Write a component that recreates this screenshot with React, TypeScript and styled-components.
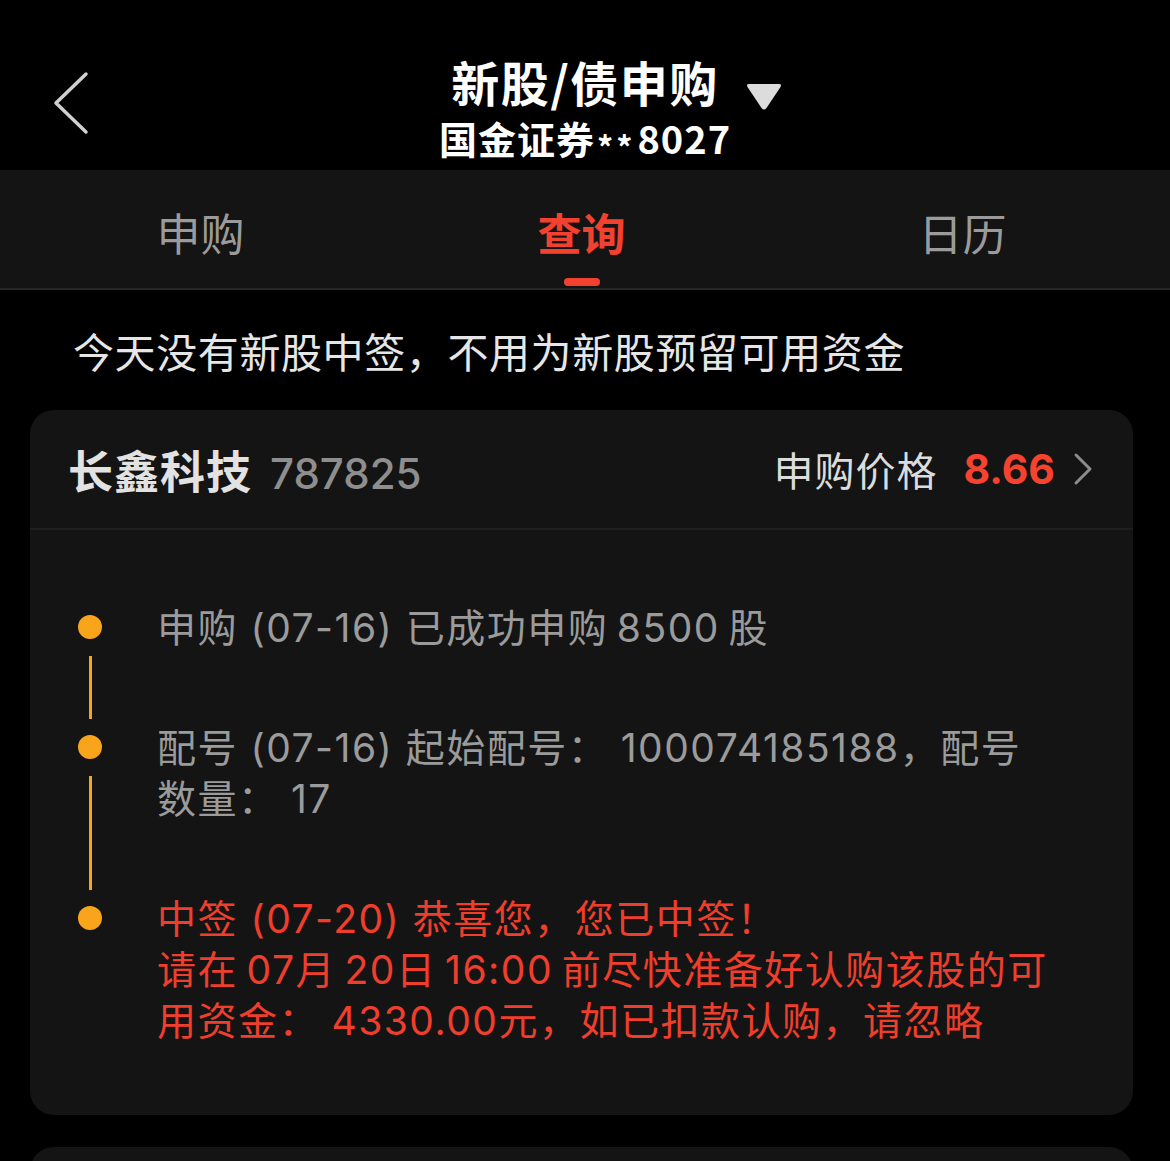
import styled, { createGlobalStyle } from "styled-components";

const GlobalStyle = createGlobalStyle`
  html, body {
    margin: 0;
    padding: 0;
    background: #000;
  }
  body {
    font-family: "Noto Sans CJK SC", "Noto Sans", sans-serif;
    color: #e6e6e6;
    -webkit-font-smoothing: antialiased;
  }
`;

const mixed = `Inter, "Noto Sans CJK SC", sans-serif`;

interface iStep {
  label: string;
  lines: string[];
  alert?: boolean;
}

const steps: iStep[] = [
  { label: "申购", lines: ["申购 (07-16) 已成功申购\u20098500\u2009股"] },
  {
    label: "配号",
    lines: ["配号 (07-16) 起始配号： 100074185188，配号", "数量： 17"],
  },
  {
    label: "中签",
    alert: true,
    lines: [
      "中签 (07-20) 恭喜您，您已中签！",
      "请在\u200907月\u200920日\u200916:00\u2009前尽快准备好认购该股的可",
      "用资金： 4330.00元，如已扣款认购，请忽略",
    ],
  },
];

const tabs = ["申购", "查询", "日历"];

export default function App() {
  return (
    <Page>
      <GlobalStyle />
      <Header>
        <BackCell>
          <svg width="40" height="64" viewBox="0 0 40 64">
            <polyline
              points="34,3 4,32 34,61"
              fill="none"
              stroke="#d0d0d0"
              strokeWidth="3.5"
              strokeLinecap="round"
              strokeLinejoin="round"
            />
          </svg>
        </BackCell>
        <TitleBlock>
          <Title>
            新股/债申购
            <Caret>
              <svg width="38" height="30" viewBox="0 0 38 30">
                <path d="M4 3 H34 Q37 3 35.5 6 L21.5 27 Q19 30 16.5 27 L2.5 6 Q1 3 4 3 Z" fill="#dcdcdc" />
              </svg>
            </Caret>
          </Title>
          <SubTitle>
            国金证券<Stars>**</Stars>8027
          </SubTitle>
        </TitleBlock>
        <div />
      </Header>

      <TabBar>
        {tabs.map((t) => (
          <Tab key={t} $active={t === "查询"}>
            <span>{t}</span>
            {t === "查询" && <Indicator />}
          </Tab>
        ))}
      </TabBar>

      <Notice>今天没有新股中签，不用为新股预留可用资金</Notice>

      <Card>
        <CardHead>
          <StockName>
            长鑫科技<Code>787825</Code>
          </StockName>
          <PriceBox>
            申购价格<Price>8.66</Price>
            <svg width="20" height="34" viewBox="0 0 20 34">
              <polyline
                points="3,3 17,17 3,31"
                fill="none"
                stroke="#8c8c8c"
                strokeWidth="3"
                strokeLinecap="round"
                strokeLinejoin="round"
              />
            </svg>
          </PriceBox>
        </CardHead>
        <Timeline>
          {steps.map((s, i) => (
            <Step key={s.label}>
              <Rail>
                <Dot />
                {i < steps.length - 1 && <Line />}
              </Rail>
              <StepText $alert={s.alert}>
                {s.lines.map((l) => (
                  <div key={l}>{l}</div>
                ))}
              </StepText>
            </Step>
          ))}
        </Timeline>
      </Card>

      <NextCard />
    </Page>
  );
}

const Page = styled.div`
  width: 1170px;
  height: 1161px;
  overflow: hidden;
  background: #000;
`;

const Header = styled.header`
  height: 170px;
  box-sizing: border-box;
  display: grid;
  grid-template-columns: 1fr auto 1fr;
  align-items: start;
`;

const BackCell = styled.div`
  padding: 71px 0 0 52px;
`;

const TitleBlock = styled.div`
  padding-top: 52px;
  display: flex;
  flex-direction: column;
  align-items: center;
  gap: 4px;
`;

const Title = styled.h1`
  position: relative;
  margin: 0;
  font-size: 48px;
  line-height: 58px;
  font-weight: 700;
  color: #fff;
  letter-spacing: 1.5px;
`;

const Caret = styled.span`
  position: absolute;
  left: calc(100% + 26px);
  top: 29px;
  display: flex;
`;

const SubTitle = styled.div`
  font-size: 38px;
  line-height: 48px;
  font-weight: 700;
  color: #fff;
  letter-spacing: 1px;
`;

const Stars = styled.span`
  position: relative;
  top: 6px;
  margin: 0 2px;
  font-size: 32px;
  letter-spacing: 3px;
`;

const TabBar = styled.nav`
  height: 118px;
  background: #141414;
  border-bottom: 2px solid #262626;
  display: grid;
  grid-template-columns: repeat(3, 381px);
  padding-left: 10px;
`;

const Tab = styled.div<{ $active?: boolean }>`
  display: flex;
  flex-direction: column;
  align-items: center;
  padding-top: 35px;
  font-size: 44px;
  line-height: 54px;
  font-weight: ${(p) => (p.$active ? 700 : 400)};
  color: ${(p) => (p.$active ? "#f2412f" : "#9b9b9b")};
`;

const Indicator = styled.div`
  width: 36px;
  height: 8px;
  margin-top: 19px;
  border-radius: 4px;
  background: #f2412f;
`;

const Notice = styled.p`
  margin: 0;
  padding: 32px 73px 32px;
  font-size: 41px;
  line-height: 56px;
  letter-spacing: 0.6px;
  color: #e6e6e6;
`;

const Card = styled.section`
  margin: 0 37px 0 30px;
  background: #141414;
  border-radius: 24px;
  overflow: hidden;
`;

const CardHead = styled.div`
  height: 120px;
  box-sizing: border-box;
  padding: 0 40px 0 38px;
  border-bottom: 2px solid #1f1f1f;
  display: flex;
  align-items: center;
  justify-content: space-between;
`;

const StockName = styled.div`
  font-size: 45px;
  font-weight: 700;
  color: #e2e2e2;
  letter-spacing: 1px;
  display: flex;
  align-items: baseline;
`;

const Code = styled.span`
  margin-left: 18px;
  font-family: ${mixed};
  font-size: 42px;
  font-weight: 500;
  letter-spacing: 0;
  color: #8e8e8e;
`;

const PriceBox = styled.div`
  display: flex;
  align-items: center;
  font-size: 40px;
  letter-spacing: 1px;
  color: #dcdcdc;
  svg {
    margin-left: 18px;
  }
`;

const Price = styled.span`
  margin-left: 26px;
  font-family: ${mixed};
  font-size: 41px;
  font-weight: 700;
  letter-spacing: 0;
  color: #f5432f;
`;

const Timeline = styled.div`
  padding: 72px 0 0 48px;
`;

const Step = styled.div`
  display: grid;
  grid-template-columns: 24px 1fr;
  column-gap: 55px;
`;

const Rail = styled.div`
  display: flex;
  flex-direction: column;
  align-items: center;
`;

const Dot = styled.div`
  width: 24px;
  height: 24px;
  margin-top: 13px;
  border-radius: 50%;
  background: #f9a51c;
`;

const Line = styled.div`
  flex: 1;
  width: 3px;
  margin: 17px 0 3px;
  background: #f9a51c;
`;

const StepText = styled.div<{ $alert?: boolean }>`
  padding-bottom: 69px;
  font-family: ${mixed};
  font-size: 39px;
  line-height: 51px;
  letter-spacing: 1.5px;
  color: ${(p) => (p.$alert ? "#ef3f2c" : "#9b9b9b")};
  white-space: nowrap;
`;

const NextCard = styled.div`
  margin: 32px 37px 0 30px;
  height: 120px;
  background: #141414;
  border-radius: 24px 24px 0 0;
`;
